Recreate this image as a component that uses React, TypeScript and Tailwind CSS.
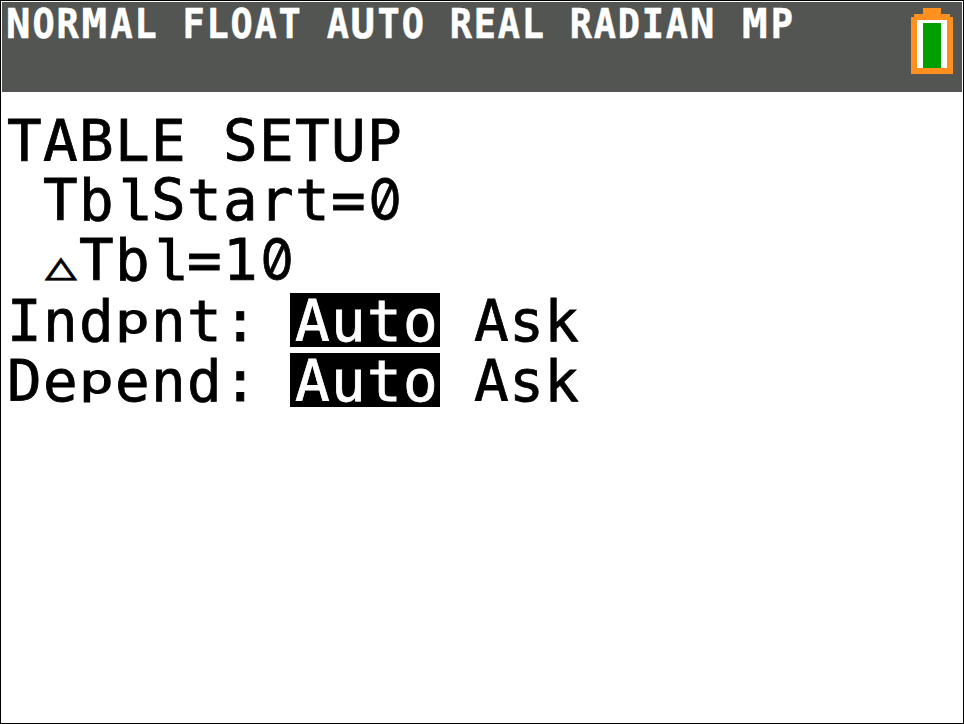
import { Fragment, type ReactNode } from "react";

// Status bar letters sit in 24px cells, with wider cells for N, U and M.
function StatusText({ text }: { text: string }) {
  return (
    <div className="origin-left scale-x-90 pl-[4px] font-['DejaVu_Sans_Mono',monospace] text-[41px] leading-[44px] font-bold tracking-[1.98px] whitespace-pre text-white [-webkit-text-stroke:0.5px]">
      {text.split("").map((char, i) => {
        if (char === "M") return <span key={i} className="inline-block scale-x-115 px-[3.33px]">{char}</span>;
        if (char === "N" || char === "U") return <span key={i} className="inline-block scale-x-110 px-[1.66px]">{char}</span>;
        return <Fragment key={i}>{char}</Fragment>;
      })}
    </div>
  );
}

// A highlighted option is drawn white on black and overhangs its cells on the left.
function Choice({ label, selected = false }: { label: string; selected?: boolean }) {
  return selected ? (
    <span className="-mt-1 -ml-[5px] block h-[54px] w-[150px] bg-black pl-[5px] leading-[58px] text-white">{label}</span>
  ) : (
    <span className="-ml-0.5 block tracking-[0.5px]">{label}</span>
  );
}

// One text line of the calculator's home screen.
function Line({ children }: { children: ReactNode }) {
  return <div className="flex h-[60px] items-center leading-[60px] whitespace-pre">{children}</div>;
}

// The lowercase L with a flat, two-sided foot.
function FootL() {
  return (
    <span className="inline-block w-9 text-center font-['Liberation_Mono',monospace] text-[57px] leading-[60px] tracking-normal [-webkit-text-stroke:1.2px_black]">
      l
    </span>
  );
}

// Zero with a diagonal slash through the bowl.
function Zero() {
  return (
    <span className="inline-block w-9 origin-center scale-x-90 text-center font-['Inter',sans-serif] text-[57.6px] leading-[60px] tracking-normal slashed-zero">
      0
    </span>
  );
}

// The calculator's p stands on the baseline, without a descender.
function ShortP() {
  return <span className="inline-block origin-[50%_23px] scale-y-70 leading-[60px] [-webkit-text-stroke:1.2px]">p</span>;
}

function Battery() {
  return (
    <svg className="mt-1.5 mr-[9px] h-[66px] w-[42px]" viewBox="0 0 14 22" shapeRendering="crispEdges">
      <path fill="#ff9020" d="M4 0h6v2h3v1h1v19H0V3h1V2h3z" />
      <path fill="#fff" d="M2 4h10v16H2z" />
      <path fill="#00a000" d="M4 5h6v15H4z" />
    </svg>
  );
}

export default function App() {
  return (
    <div className="flex h-[724px] w-[964px] flex-col border border-black bg-white p-px">
      <header className="flex h-[90px] shrink-0 items-start justify-between bg-[#525552]">
        <StatusText text="NORMAL FLOAT AUTO REAL RADIAN MP" />
        <Battery />
      </header>
      <main className="pt-5 pl-[5px] font-['DejaVu_Sans_Mono',monospace] text-[57.6px] tracking-[1.32px] text-black [-webkit-text-stroke:0.8px]">
        <Line>TABLE SETUP</Line>
        <Line>
          <span> Tb<FootL />Start=<Zero /></span>
        </Line>
        <Line>
          <span className="w-9" />
          <span className="flex w-9 scale-x-120 scale-y-85 items-center justify-center pt-[9px] text-[44px] tracking-normal">△</span>
          <span>Tb<FootL />=1<Zero /></span>
        </Line>
        <Line>
          <span className="w-72">Ind<ShortP />nt:</span>
          <Choice label="Auto" selected />
          <span className="w-9" />
          <Choice label="Ask" />
        </Line>
        <Line>
          <span className="w-72">De<ShortP />end:</span>
          <Choice label="Auto" selected />
          <span className="w-9" />
          <Choice label="Ask" />
        </Line>
      </main>
    </div>
  );
}
